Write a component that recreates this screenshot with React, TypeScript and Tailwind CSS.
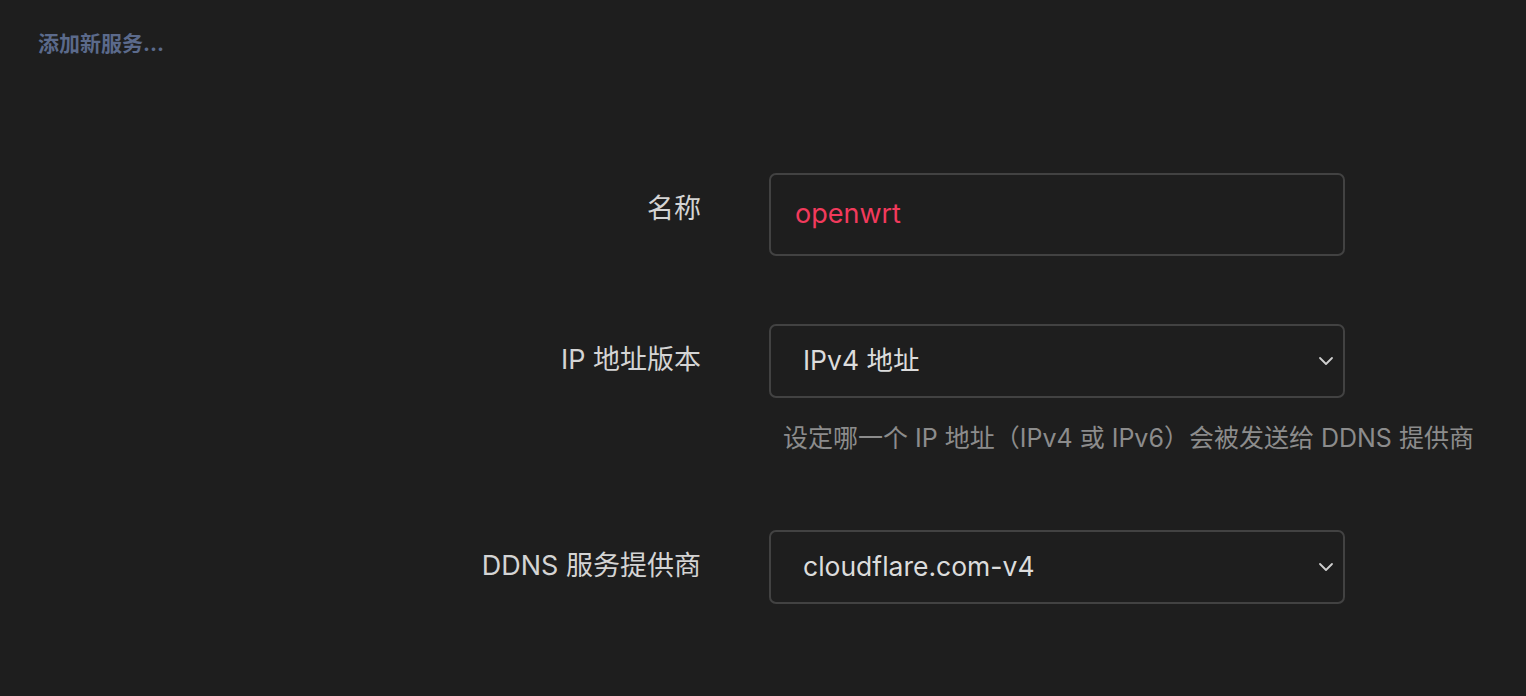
import { ChevronDown } from "lucide-react";

const font = { fontFamily: '"Inter", "Noto Sans CJK SC", sans-serif' };

function Label({ children }: { children: React.ReactNode }) {
  return (
    <div className="w-[701px] shrink-0 pt-[18px] text-right text-[27px] leading-[36px] text-[#d4d4d4]">
      {children}
    </div>
  );
}

function Select({ value }: { value: string }) {
  return (
    <div className="flex h-[74px] w-[576px] items-center justify-between rounded-[7px] border-2 border-[#424242] pl-[32px] pr-[5px] text-[26.5px] text-[#dcdcdc]">
      <span>{value}</span>
      <ChevronDown size={24} strokeWidth={1.8} className="text-[#cfcfcf]" />
    </div>
  );
}

export default function App() {
  return (
    <div className="min-h-screen w-full bg-[#1e1e1e]" style={font}>
      <div className="px-[38px] pt-[29px] text-[21px] font-bold leading-[30px] text-[#5b6a8b]">添加新服务...</div>

      <div className="mt-[114px] flex flex-col">
        <div className="flex gap-[68px]">
          <Label>名称</Label>
          <div className="flex h-[83px] w-[576px] items-center rounded-[7px] border-2 border-[#424242] pl-[24px] text-[27px] text-[#f23a5c]">
            openwrt
          </div>
        </div>

        <div className="mt-[68px] flex gap-[68px]">
          <Label>IP 地址版本</Label>
          <div className="flex flex-col">
            <Select value="IPv4 地址" />
            <p className="mt-[24px] pl-[14px] text-[25px] leading-[32px] text-[#8c8c8c] whitespace-nowrap">
              设定哪一个 IP 地址（IPv4 或 IPv6）会被发送给 DDNS 提供商
            </p>
          </div>
        </div>

        <div className="mt-[76px] flex gap-[68px]">
          <Label>DDNS 服务提供商</Label>
          <Select value="cloudflare.com-v4" />
        </div>
      </div>
    </div>
  );
}
